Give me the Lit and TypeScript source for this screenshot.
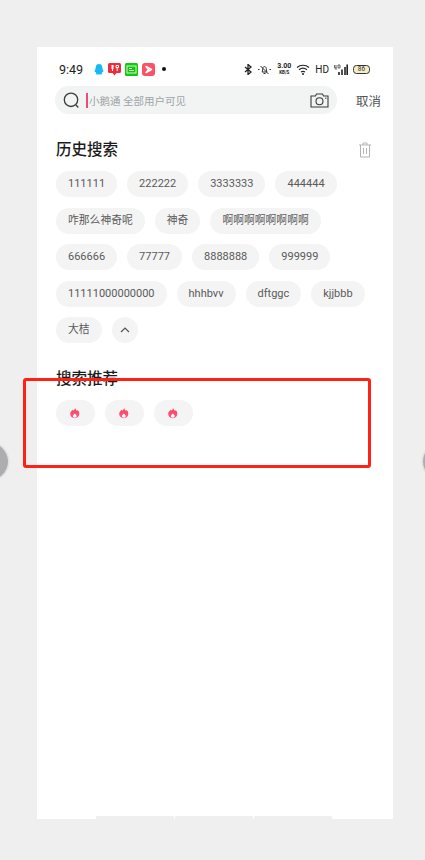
import { LitElement, html, css, svg } from "lit";
import { customElement } from "lit/decorators.js";

const rows = [
  "111111", "222222", "3333333", "444444",
  "咋那么神奇呢", "神奇", "啊啊啊啊啊啊啊啊",
  "666666", "77777", "8888888", "999999",
  "11111000000000", "hhhbvv", "dftggc", "kjjbbb",
  "大桔",
];

const isAscii = (t: string) => /^[\x00-\x7f]+$/.test(t);

const flame = svg`<svg class="flame" viewBox="0 0 12 14" width="9.500" height="12">
  <defs><linearGradient id="fl" x1="0" y1="0" x2="0" y2="1"><stop offset="0" stop-color="#f9434f"/><stop offset="1" stop-color="#fd5a8c"/></linearGradient></defs>
  <path fill="url(#fl)" d="M6.400.3c.5 2.300 1.700 3 2.700 4.300.3-.5.4-1 .4-1.600C11 4.400 11.800 6.200 11.800 8.100 11.800 11.300 9.300 13.700 6 13.700S.2 11.300.2 8.100C.2 5 3.200 3.900 3.800 2.700c.2.500.3 1 .3 1.500C5.300 3.300 6.300 2 6.400.3Z"/>
  <path fill="#fff" d="M6 7.500c.8 1 2.300 1.700 2.300 3.300 0 1.300-1 2.100-2.300 2.100s-2.300-.8-2.300-2.100C3.700 9.400 5.400 9 6 7.500Z"/>
</svg>`;

@customElement("app-root")
export class AppRoot extends LitElement {
  static styles = css`
    :host { display: block; position: relative; width: 425px; height: 860px; overflow: hidden; background: #efefef;
      font-family: Roboto, "Noto Sans CJK SC", sans-serif; color: #555; }
    .phone { box-sizing: border-box; position: absolute; top: 47px; left: 37px; width: 356px; height: 772px; background: #fff; display: flex; flex-direction: column; }
    .status { height: 39px; flex: none; display: flex; align-items: center; padding: 5px 23px 0 22px; box-sizing: border-box; }
    .time { font-size: 12.500px; color: #222; width: 30px; }
    .apps { display: flex; align-items: center; gap: 4px; margin-left: 5px; }
    .dot { width: 4px; height: 4px; border-radius: 50%; background: #111; margin-left: 3px; }
    .right { margin-left: auto; display: flex; align-items: center; gap: 5px; color: #222; }
    .hd { font-size: 10px; color: #222; }
    .speed { font-size: 7px; line-height: 7px; text-align: center; font-weight: 700; color: #222; }
    .speed small { display: block; font-size: 4.500px; line-height: 5px; }
    .batt { width: 17px; height: 9px; box-sizing: border-box; border: 1px solid #333; border-radius: 3.500px; background: #f5ecc8; font-size: 6.500px; line-height: 7px; text-align: center; color: #333; }
    .searchrow { display: flex; align-items: center; padding: 0 12px 0 18px; height: 28px; flex: none; margin-bottom: 25px; }
    .search { flex: none; width: 282px; height: 28px; border-radius: 14px; background: #f2f3f3; display: flex; align-items: center; padding: 0 8px; box-sizing: border-box; }
    .caret { width: 2px; height: 15px; background: #ec4b82; margin: 0 1px 0 6px; flex: none; }
    .ph { font-size: 10.500px; color: #9ea5a8; white-space: nowrap; flex: 1; }
    .cancel { font-size: 12.500px; color: #555; margin-left: auto; }
    .sec { padding: 0 0 0 19px; }
    .head { display: flex; align-items: center; justify-content: space-between; padding-right: 21px; height: 22px; }
    h2 { margin: 0; font-size: 15.500px; line-height: 22px; font-weight: 500; color: #1c1c1c; }
    .chips { display: flex; flex-wrap: wrap; gap: 10.500px 10px; margin-top: 10px; width: 320px; }
    .chip { height: 26px; line-height: 26px; border-radius: 13px; background: #f4f4f4; padding: 0 12px; font-size: 11px; color: #5a5a5a; white-space: nowrap; }
    .chip.cjk { font-size: 10.800px; }
    .up { width: 26px; padding: 0; display: flex; align-items: center; justify-content: center; }
    .sec2 { margin-top: 25px; }
    .hot { width: 39px; padding: 0 1px 0 0; box-sizing: border-box; display: flex; align-items: center; justify-content: center; }
    .dock { position: absolute; bottom: 0; left: 59px; display: flex; gap: 1px; }
    .dock span { width: 78px; height: 3px; background: #efefef; border-radius: 1px 1px 0 0; }
    .mark { position: absolute; left: 23px; top: 378px; width: 348px; height: 90px; box-sizing: border-box; border: 3px solid #ff2016; border-radius: 3px; }
    .ball { position: absolute; top: 443px; width: 37px; height: 37px; border-radius: 50%; background: #adadb1; box-shadow: 0 0 0 1.500px #e2e2e2; }
    .ball.l { left: -29px; }
    .ball.r { left: 423px; }
  `;

  render() {
    return html`
      <div class="phone">
        <div class="status">
          <span class="time">9:49</span>
          <div class="apps">
            <svg width="10" height="13" viewBox="0 0 12 14"><path fill="#19b9f5" d="M6 .5c2.700 0 4 2 4 4.500 0 1 .4 1.500 1 3 .4 1.300.3 2.300-.3 2.300-.3 0-.6-.3-.8-.7-.1.800-.4 1.400-.8 1.800.7.300 1.100.7 1 1.100-.1.400-1.200.5-2.400.5-.8 0-1.300-.2-1.700-.4-.4.200-.9.400-1.700.4-1.200 0-2.300-.1-2.400-.5-.1-.4.300-.8 1-1.100-.4-.4-.7-1-.8-1.800-.2.400-.5.700-.8.700-.6 0-.7-1-.3-2.300.6-1.500 1-2 1-3C2 2.500 3.300.5 6 .5Z"/></svg>
            <svg width="13" height="13" viewBox="0 0 13 13"><path fill="#ee2c3c" d="M1.500 0h10A1.500 1.500 0 0 1 13 1.500v7A1.500 1.500 0 0 1 11.500 10H8.500L6.500 12.500 4.500 10h-3A1.500 1.500 0 0 1 0 8.500v-7A1.500 1.500 0 0 1 1.500 0Z"/><path stroke="#fff" stroke-width="1" fill="none" d="M3 3h3M3 5h3M4.500 2v6M8 2.500h2.500v2H8zM9.200 5v3"/></svg>
            <svg width="13" height="13" viewBox="0 0 13 13"><rect width="13" height="13" rx="1.500" fill="#12c712"/><rect x="2" y="3" width="9" height="7" fill="none" stroke="#d8f7c8" stroke-width="1"/><path stroke="#d8f7c8" d="M4 5.500h3M4 7.500h5"/></svg>
            <svg width="13" height="13" viewBox="0 0 13 13"><rect width="13" height="13" rx="3" fill="#fb5067"/><path fill="none" stroke="#fff" stroke-width="1.500" stroke-linejoin="round" d="M4 3.500 9.500 6.500 4 9.500 6.500 6.500Z"/></svg>
            <span class="dot"></span>
          </div>
          <div class="right">
            <svg width="8" height="11" viewBox="0 0 8 11"><path fill="none" stroke="#222" stroke-width="1.300" d="M1 3l6 5-3 2.500v-10L7 3 1 8"/></svg>
            <svg width="15" height="11" viewBox="0 0 14 11"><path fill="none" stroke="#333" stroke-width="1" d="M4.500 8c.8-1 .5-3 1-4.500C6 2.300 8 2.300 8.500 3.500 9 5 8.800 7 9.500 8ZM6 9.500h2M3 2l8 8M.5 5.500h1.500M12 5.500h1.500"/></svg>
            <div class="speed">3.00<small>KB/S</small></div>
            <svg width="14" height="11" viewBox="0 0 14 11"><path fill="none" stroke="#222" stroke-width="1.200" d="M1 3.500c3.500-3 8.500-3 12 0M3 5.800c2.500-2 5.500-2 8 0M5 8c1.300-.8 2.700-.8 4 0"/><circle cx="7" cy="10" r="1" fill="#222"/></svg>
            <span class="hd">HD</span>
            <svg width="14" height="11" viewBox="0 0 14 11"><path stroke="#222" stroke-width="1.600" d="M5 11V8M8 11V5.500M11 11V3M13.200 11V.5"/><path stroke="#444" stroke-width=".8" fill="none" d="M.5 1v3h2M2 1v5M4 1h2v3H4z"/></svg>
            <div class="batt">86</div>
          </div>
        </div>
        <div class="searchrow">
          <div class="search">
            <svg width="17" height="17" viewBox="0 0 17 17"><circle cx="8" cy="7.800" r="6.700" fill="none" stroke="#3b3b3b" stroke-width="1.300"/><path stroke="#3b3b3b" stroke-width="1.300" d="M13 13l2.300 2.500"/></svg>
            <span class="caret"></span>
            <span class="ph">小鹅通 全部用户可见</span>
            <svg width="19" height="15" viewBox="0 0 19 15"><path fill="none" stroke="#3b3b3b" stroke-width="1.100" d="M1 3h4.500l1-2h6l1 2H18v11H1Z"/><circle cx="9.500" cy="8.300" r="3.500" fill="none" stroke="#3b3b3b" stroke-width="1.100"/><path stroke="#3b3b3b" d="M15 5.200h1.500"/></svg>
          </div>
          <span class="cancel">取消</span>
        </div>
        <div class="sec">
          <div class="head">
            <h2>历史搜索</h2>
            <svg width="14" height="16" viewBox="0 0 14 16"><path fill="none" stroke="#b3b3b3" stroke-width="1" d="M1 3h12M5 3V1h4v2M2.500 3v12h9V3M5.500 6v6M8.500 6v6"/></svg>
          </div>
          <div class="chips">
            ${rows.map((t) => html`<span class="chip ${isAscii(t) ? "" : "cjk"}">${t}</span>`)}
            <span class="chip up"><svg width="10" height="6" viewBox="0 0 10 6"><path fill="none" stroke="#555" stroke-width="1.200" d="M1 5l4-4 4 4"/></svg></span>
          </div>
        </div>
        <div class="sec sec2">
          <div class="head"><h2>搜索推荐</h2></div>
          <div class="chips">
            ${[0, 1, 2].map(() => html`<span class="chip hot">${flame}</span>`)}
          </div>
        </div>
        <div class="dock"><span></span><span></span><span></span></div>
      </div>
      <div class="mark"></div>
      <div class="ball l"></div>
      <div class="ball r"></div>
    `;
  }
}
